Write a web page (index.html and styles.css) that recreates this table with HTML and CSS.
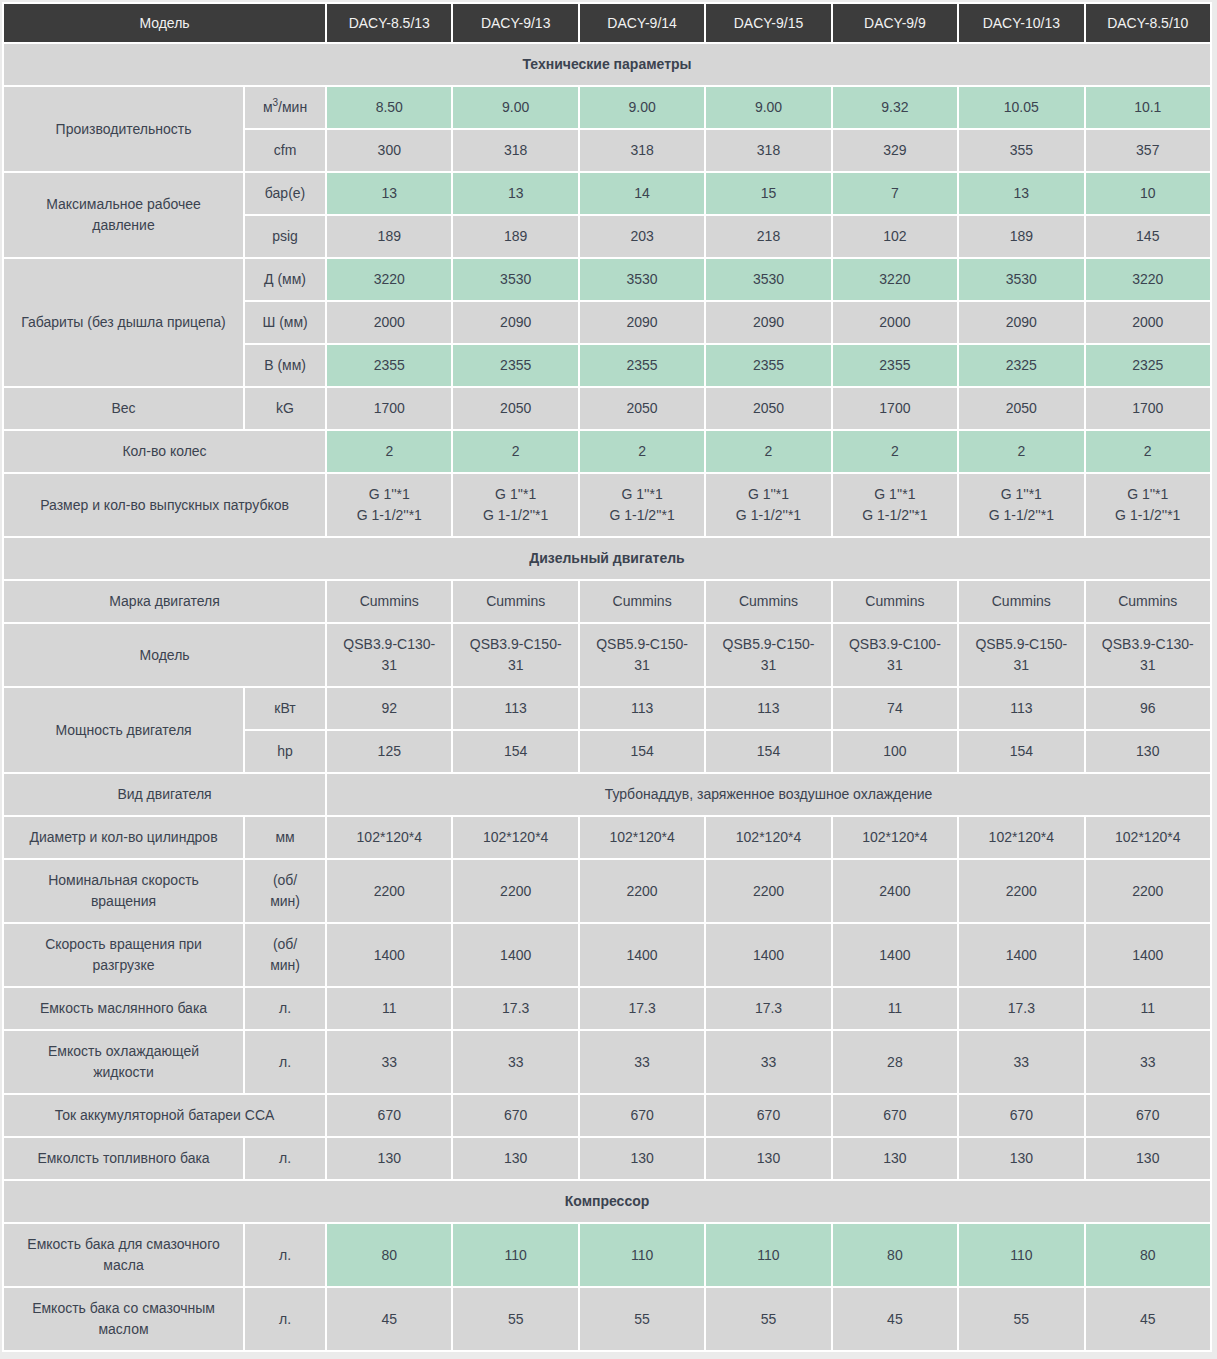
FILE: index.html
```html
<!DOCTYPE html>
<html lang="ru">
<head>
<meta charset="utf-8">
<title>DACY</title>
<link rel="stylesheet" href="styles.css">
</head>
<body>
<table class="spec">
  <colgroup>
    <col class="c-label"><col class="c-unit">
    <col class="c-data"><col class="c-data"><col class="c-data"><col class="c-data"><col class="c-data"><col class="c-data"><col class="c-data">
  </colgroup>
  <thead>
    <tr class="head">
      <th colspan="2">Модель</th>
      <th>DACY-8.5/13</th><th>DACY-9/13</th><th>DACY-9/14</th><th>DACY-9/15</th><th>DACY-9/9</th><th>DACY-10/13</th><th>DACY-8.5/10</th>
    </tr>
  </thead>
  <tbody>
    <tr class="section"><td colspan="9">Технические параметры</td></tr>
    <tr class="hl">
      <td rowspan="2">Производительность</td><td>м<sup>3</sup>/мин</td>
      <td>8.50</td><td>9.00</td><td>9.00</td><td>9.00</td><td>9.32</td><td>10.05</td><td>10.1</td>
    </tr>
    <tr>
      <td>cfm</td>
      <td>300</td><td>318</td><td>318</td><td>318</td><td>329</td><td>355</td><td>357</td>
    </tr>
    <tr class="hl">
      <td rowspan="2">Максимальное рабочее давление</td><td>бар(е)</td>
      <td>13</td><td>13</td><td>14</td><td>15</td><td>7</td><td>13</td><td>10</td>
    </tr>
    <tr>
      <td>psig</td>
      <td>189</td><td>189</td><td>203</td><td>218</td><td>102</td><td>189</td><td>145</td>
    </tr>
    <tr class="hl">
      <td rowspan="3">Габариты (без дышла прицепа)</td><td>Д (мм)</td>
      <td>3220</td><td>3530</td><td>3530</td><td>3530</td><td>3220</td><td>3530</td><td>3220</td>
    </tr>
    <tr>
      <td>Ш (мм)</td>
      <td>2000</td><td>2090</td><td>2090</td><td>2090</td><td>2000</td><td>2090</td><td>2000</td>
    </tr>
    <tr class="hl">
      <td>В (мм)</td>
      <td>2355</td><td>2355</td><td>2355</td><td>2355</td><td>2355</td><td>2325</td><td>2325</td>
    </tr>
    <tr>
      <td>Вес</td><td>kG</td>
      <td>1700</td><td>2050</td><td>2050</td><td>2050</td><td>1700</td><td>2050</td><td>1700</td>
    </tr>
    <tr class="hl">
      <td colspan="2">Кол-во колес</td>
      <td>2</td><td>2</td><td>2</td><td>2</td><td>2</td><td>2</td><td>2</td>
    </tr>
    <tr>
      <td colspan="2">Размер и кол-во выпускных патрубков</td>
      <td>G 1''*1<br>G 1-1/2''*1</td><td>G 1''*1<br>G 1-1/2''*1</td><td>G 1''*1<br>G 1-1/2''*1</td><td>G 1''*1<br>G 1-1/2''*1</td><td>G 1''*1<br>G 1-1/2''*1</td><td>G 1''*1<br>G 1-1/2''*1</td><td>G 1''*1<br>G 1-1/2''*1</td>
    </tr>
    <tr class="section"><td colspan="9">Дизельный двигатель</td></tr>
    <tr>
      <td colspan="2">Марка двигателя</td>
      <td>Cummins</td><td>Cummins</td><td>Cummins</td><td>Cummins</td><td>Cummins</td><td>Cummins</td><td>Cummins</td>
    </tr>
    <tr>
      <td colspan="2">Модель</td>
      <td>QSB3.9-C130-31</td><td>QSB3.9-C150-31</td><td>QSB5.9-C150-31</td><td>QSB5.9-C150-31</td><td>QSB3.9-C100-31</td><td>QSB5.9-C150-31</td><td>QSB3.9-C130-31</td>
    </tr>
    <tr>
      <td rowspan="2">Мощность двигателя</td><td>кВт</td>
      <td>92</td><td>113</td><td>113</td><td>113</td><td>74</td><td>113</td><td>96</td>
    </tr>
    <tr>
      <td>hp</td>
      <td>125</td><td>154</td><td>154</td><td>154</td><td>100</td><td>154</td><td>130</td>
    </tr>
    <tr>
      <td colspan="2">Вид двигателя</td>
      <td colspan="7">Турбонаддув, заряженное воздушное охлаждение</td>
    </tr>
    <tr>
      <td>Диаметр и кол-во цилиндров</td><td>мм</td>
      <td>102*120*4</td><td>102*120*4</td><td>102*120*4</td><td>102*120*4</td><td>102*120*4</td><td>102*120*4</td><td>102*120*4</td>
    </tr>
    <tr>
      <td>Номинальная скорость вращения</td><td>(об/мин)</td>
      <td>2200</td><td>2200</td><td>2200</td><td>2200</td><td>2400</td><td>2200</td><td>2200</td>
    </tr>
    <tr>
      <td>Скорость вращения при разгрузке</td><td>(об/мин)</td>
      <td>1400</td><td>1400</td><td>1400</td><td>1400</td><td>1400</td><td>1400</td><td>1400</td>
    </tr>
    <tr>
      <td>Емкость маслянного бака</td><td>л.</td>
      <td>11</td><td>17.3</td><td>17.3</td><td>17.3</td><td>11</td><td>17.3</td><td>11</td>
    </tr>
    <tr>
      <td>Емкость охлаждающей жидкости</td><td>л.</td>
      <td>33</td><td>33</td><td>33</td><td>33</td><td>28</td><td>33</td><td>33</td>
    </tr>
    <tr>
      <td colspan="2">Ток аккумуляторной батареи CCA</td>
      <td>670</td><td>670</td><td>670</td><td>670</td><td>670</td><td>670</td><td>670</td>
    </tr>
    <tr>
      <td>Емколсть топливного бака</td><td>л.</td>
      <td>130</td><td>130</td><td>130</td><td>130</td><td>130</td><td>130</td><td>130</td>
    </tr>
    <tr class="section"><td colspan="9">Компрессор</td></tr>
    <tr class="hl">
      <td>Емкость бака для смазочного масла</td><td>л.</td>
      <td>80</td><td>110</td><td>110</td><td>110</td><td>80</td><td>110</td><td>80</td>
    </tr>
    <tr>
      <td>Емкость бака со смазочным маслом</td><td>л.</td>
      <td>45</td><td>55</td><td>55</td><td>55</td><td>45</td><td>55</td><td>45</td>
    </tr>
  </tbody>
</table>
</body>
</html>
```

FILE: styles.css
```css
html, body {
  margin: 0;
  padding: 0;
  background: #ebebeb;
}
body {
  padding: 2px;
  font-family: "Liberation Sans", Arial, sans-serif;
  font-size: 14px;
  line-height: 21px;
  color: #3b4350;
}
.spec {
  width: 1210px;
  table-layout: fixed;
  border-collapse: separate;
  border-spacing: 2px;
  background: #ffffff;
}
.c-label { width: 239px; }
.c-unit { width: 80px; }
.c-data { width: 124.4px; }
.spec td, .spec th {
  background: #d6d6d6;
  text-align: center;
  vertical-align: middle;
  padding: 10px 15px;
  font-weight: normal;
  overflow-wrap: normal;
}
.spec .head th {
  background: #3c3c3c;
  color: #f2f2f2;
  padding: 9px 15px 8px;
}
.spec .section td {
  font-weight: bold;
}
.spec .hl td:nth-last-child(-n+7) {
  background: #b3dbc8;
}
.spec sup {
  font-size: 10px;
  line-height: 0;
  vertical-align: 6px;
}
```
